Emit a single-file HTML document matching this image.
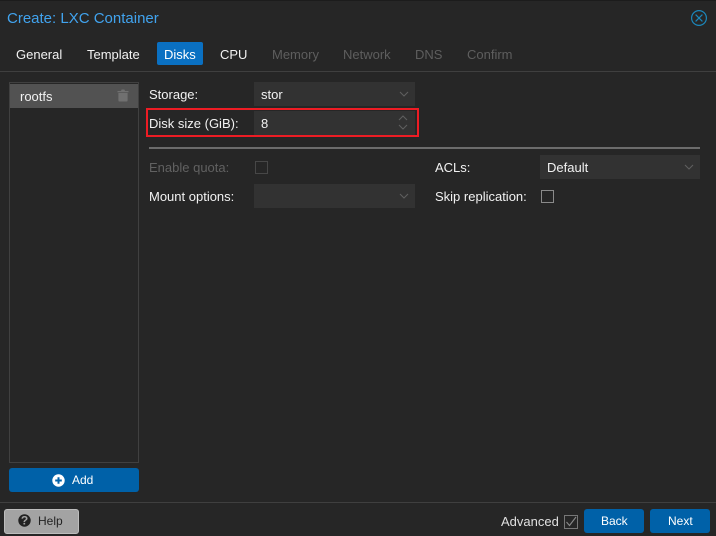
<!DOCTYPE html>
<html><head><meta charset="utf-8">
<style>
html,body{margin:0;padding:0;width:716px;height:536px;overflow:hidden;background:#262626;font-family:"Liberation Sans",sans-serif;font-size:13px;color:#f2f2f2}
.a{position:absolute}
.t{position:absolute;white-space:nowrap;line-height:16px}
.f{position:absolute;background:#323232;height:24px}
.d{color:#5e5e5e}
.btn{position:absolute;background:#0061a8;border-radius:3px;color:#fff;text-align:center}
svg{position:absolute;overflow:visible}
</style></head><body>
<div class="a" style="left:0;top:0;width:716px;height:1px;background:#1c1c1c"></div>
<div class="t" style="left:7px;top:11px;font-size:15px;color:#41a3ee">Create: LXC Container</div>
<svg style="left:691px;top:10px" width="16" height="16" fill="none" stroke="#1b87bb" stroke-width="1.2"><circle cx="8" cy="8" r="7.4"/><path d="M4.6 4.6L11.4 11.4M11.4 4.6L4.6 11.4"/></svg>

<div class="t" style="left:16px;top:47px">General</div>
<div class="t" style="left:87px;top:47px">Template</div>
<div class="a" style="left:157px;top:42px;width:46px;height:23px;background:#0a70c2;border-radius:2px"></div>
<div class="t" style="left:164px;top:47px;color:#fff">Disks</div>
<div class="t" style="left:220px;top:47px">CPU</div>
<div class="t d" style="left:272px;top:47px">Memory</div>
<div class="t d" style="left:343px;top:47px">Network</div>
<div class="t d" style="left:415px;top:47px">DNS</div>
<div class="t d" style="left:467px;top:47px">Confirm</div>
<div class="a" style="left:0;top:71px;width:716px;height:1px;background:#3f3f3f"></div>

<div class="a" style="left:9px;top:82px;width:128px;height:379px;border:1px solid #404040"></div>
<div class="a" style="left:10px;top:84px;width:128px;height:24px;background:#525252"></div>
<div class="t" style="left:20px;top:89px">rootfs</div>
<svg style="left:117px;top:89px" width="12" height="13" fill="#707070"><path d="M0.5 2H4L4.6 0.5H7.4L8 2H11.5V3.2H0.5ZM1.4 4H10.6V11.5Q10.6 12.5 9.6 12.5H2.4Q1.4 12.5 1.4 11.5Z"/></svg>

<div class="btn" style="left:9px;top:468px;width:130px;height:24px"></div>
<svg style="left:52px;top:474px" width="13" height="13"><circle cx="6.5" cy="6.5" r="6.2" fill="#fff"/><path d="M6.5 3.2V9.8M3.2 6.5H9.8" stroke="#0061a8" stroke-width="2"/></svg>
<div class="t" style="left:72px;top:472px;color:#fff;font-size:12px">Add</div>

<div class="t" style="left:149px;top:87px">Storage:</div>
<div class="f" style="left:254px;top:82px;width:161px"></div>
<div class="t" style="left:261px;top:87px">stor</div>
<svg style="left:399px;top:91px" width="10" height="6" fill="none" stroke="#5f5f5f" stroke-width="1.1"><path d="M1 1L5 5L9 1"/></svg>

<div class="t" style="left:149px;top:116px">Disk size (GiB):</div>
<div class="f" style="left:254px;top:111px;width:161px"></div>
<div class="t" style="left:261px;top:116px">8</div>
<div class="a" style="left:146px;top:108px;width:269px;height:25px;border:2px solid #ed1c24"></div>
<svg style="left:398px;top:115px" width="10" height="16" fill="none" stroke="#5f5f5f" stroke-width="1.1"><path d="M1 5L5 1L9 5M1 10L5 14L9 10"/></svg>

<div class="a" style="left:149px;top:147px;width:551px;height:2px;background:#6c6c6c"></div>

<div class="t d" style="left:149px;top:160px;color:#616161">Enable quota:</div>
<div class="a" style="left:255px;top:161px;width:11px;height:11px;border:1px solid #474747"></div>
<div class="t" style="left:149px;top:189px">Mount options:</div>
<div class="f" style="left:254px;top:184px;width:161px"></div>
<svg style="left:399px;top:193px" width="10" height="6" fill="none" stroke="#5f5f5f" stroke-width="1.1"><path d="M1 1L5 5L9 1"/></svg>

<div class="t" style="left:435px;top:160px">ACLs:</div>
<div class="f" style="left:540px;top:155px;width:160px"></div>
<div class="t" style="left:547px;top:160px">Default</div>
<svg style="left:684px;top:164px" width="10" height="6" fill="none" stroke="#5f5f5f" stroke-width="1.1"><path d="M1 1L5 5L9 1"/></svg>
<div class="t" style="left:435px;top:189px">Skip replication:</div>
<div class="a" style="left:541px;top:190px;width:11px;height:11px;border:1px solid #8a8a8a"></div>

<div class="a" style="left:0;top:502px;width:716px;height:1px;background:#3f3f3f"></div>
<div class="a" style="left:4px;top:509px;width:73px;height:23px;background:#a3a3a3;border:1px solid #bdbdbd;border-radius:3px"></div>
<svg style="left:18px;top:514px" width="13" height="13"><circle cx="6.5" cy="6.5" r="6.2" fill="#222"/><text x="6.5" y="10.7" text-anchor="middle" font-family="Liberation Sans" font-size="12" font-weight="bold" fill="#a3a3a3">?</text></svg>
<div class="t" style="left:38px;top:513px;color:#222;font-size:12px">Help</div>

<div class="t" style="left:501px;top:514px;font-size:13px;color:#e0e0e0">Advanced</div>
<div class="a" style="left:564px;top:515px;width:12px;height:12px;border:1px solid #777"></div>
<svg style="left:565px;top:516px" width="12" height="12" fill="none" stroke="#8a8a8a" stroke-width="1.1"><path d="M1.5 6L4.5 9.5L11 1"/></svg>
<div class="btn" style="left:584px;top:509px;width:60px;height:24px"></div>
<div class="t" style="left:601px;top:513px;color:#fff;font-size:12px">Back</div>
<div class="btn" style="left:650px;top:509px;width:60px;height:24px"></div>
<div class="t" style="left:668px;top:513px;color:#fff;font-size:12px">Next</div>
</body></html>
